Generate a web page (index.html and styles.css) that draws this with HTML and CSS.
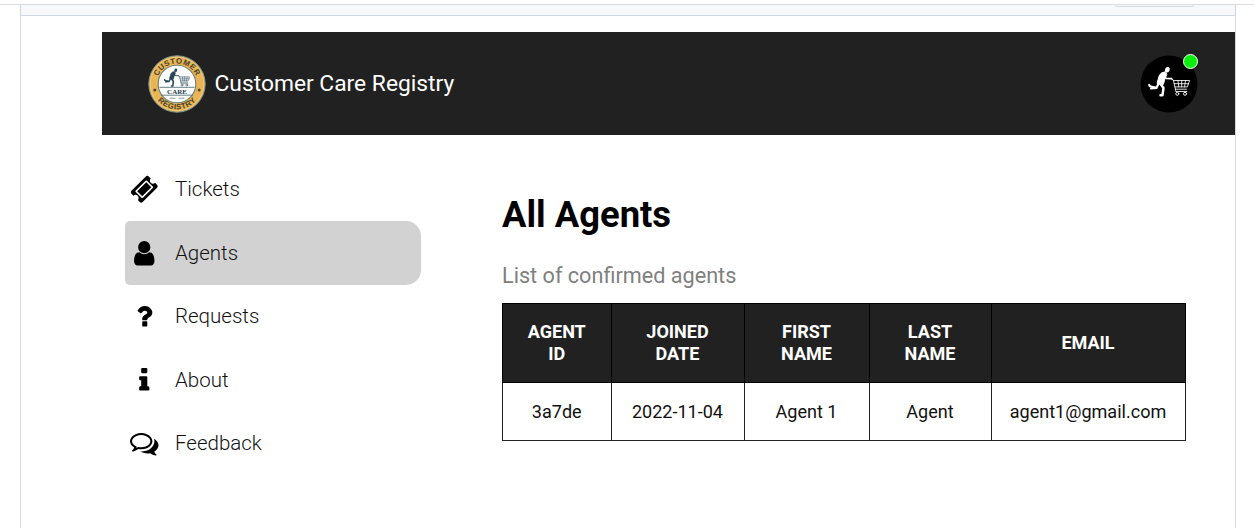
FILE: index.html
```html
<!DOCTYPE html>
<html lang="en">
<head>
<meta charset="utf-8">
<title>Customer Care Registry</title>
<link rel="stylesheet" href="styles.css">
</head>
<body>
<div class="page">
  <div class="viewer">
    <div class="viewer-bar"><span class="viewer-button"></span></div>
    <div class="app">
      <header class="header">
        <svg class="logo" viewBox="0 0 58 58">
          <defs>
            <path id="arc-top" d="M8.500 29a20.500 20.500 0 0 1 41 0"/>
            <path id="arc-bottom" d="M3.600 29a25.400 25.400 0 0 0 50.800 0"/>
          </defs>
          <circle cx="29" cy="29" r="28.2" fill="#eab354" stroke="#7c9890" stroke-width="1"/>
          <circle cx="29" cy="29" r="26.8" fill="none" stroke="#f3d796" stroke-width=".6"/>
          <circle cx="29" cy="29" r="18.8" fill="#fff" stroke="#68857f" stroke-width="1.1"/>
          <text class="seal-text"><textPath href="#arc-top" startOffset="50%">CUSTOMER</textPath></text>
          <text class="seal-text"><textPath href="#arc-bottom" startOffset="50%">REGISTRY</textPath></text>
          <circle cx="6.8" cy="35" r="1.5" fill="#4e4a30"/>
          <circle cx="51.2" cy="35" r="1.5" fill="#4e4a30"/>
          <g transform="translate(15.5 13.2) scale(.62)" color="#274657"><use href="#runner"/></g>
          <path d="M11.5 32.3h35M13 40.2h32" stroke="#55737c" stroke-width=".9"/>
          <text class="seal-care" x="29" y="38.8">CARE</text>
          <path d="M21.5 43.2h6M30.5 43.2h6" stroke="#8da0a4" stroke-width="1"/>
        </svg>
        <h1 class="brand">Customer Care Registry</h1>
        <div class="avatar">
          <svg viewBox="0 0 58 58" width="58" height="58">
            <circle cx="29" cy="29" r="28.5" fill="#000"/>
            <g transform="translate(7.5 11.5)" color="#fff">
              <g id="runner" fill="currentColor" stroke="currentColor" stroke-linecap="round" stroke-linejoin="round">
                <ellipse cx="19.8" cy="3.2" rx="2.3" ry="2.8" stroke="none" transform="rotate(20 19.8 3.2)"/>
                <path d="M17.800 5.300q-4 .2-6 3.500-1.200 4-2.200 8l5.500 2q1.500-2 2-5.500l2-5z" stroke-width="1"/>
                <path d="M17 8.500l1.500 3.400 5.600.3" fill="none" stroke-width="1.7"/>
                <path d="M12.700 17l3.300 4.400-1 7.300h-2" fill="none" stroke-width="2.500"/>
                <path d="M11.300 16.500l-2.300 4.800-6.500-1.500-.8-1.300M9 21.500l-5.500.5" fill="none" stroke-width="2.200"/>
                <path d="M23.500 12.200l2.300 1.200 2.200 9.300h11M25.800 14h16.300l-2.300 6.400H27.400M26.600 17.200h14.500M30.500 14l.8 6.400M34.200 14v6.400M38 14l-.9 6.400M28 22.700l.3 2.300h11" fill="none" stroke-width=".85"/>
                <circle cx="29.8" cy="27.3" r="1.5" fill="none" stroke-width=".9"/>
                <circle cx="37.5" cy="27.3" r="1.5" fill="none" stroke-width=".9"/>
              </g>
            </g>
          </svg>
          <span class="status"></span>
        </div>
      </header>
      <div class="body">
        <nav class="nav">
          <a class="nav-item"><svg class="icon" viewBox="0 0 1792 1792"><path d="M1024 452l316 316-572 572-316-316zm-211 979l618-618q19-19 19-45t-19-45l-362-362q-18-18-45-18t-45 18l-618 618q-19 19-19 45t19 45l362 362q18 18 45 18t45-18zm889-637l-907 908q-37 37-90.500 37t-90.500-37l-126-126q56-56 56-136t-56-136-136-56-136 56l-125-126q-37-37-37-90.500t37-90.500l907-906q37-37 90.500-37t90.500 37l125 125q-56 56-56 136t56 136 136 56 136-56l126 125q37 37 37 90.500t-37 90.500z"/></svg><span>Tickets</span></a>
          <a class="nav-item active"><svg class="icon" viewBox="0 0 1792 1792"><path d="M1536 1399q0 109-62.500 187t-150.500 78h-854q-88 0-150.500-78t-62.500-187q0-85 8.500-160.500t31.500-152 58.500-131 94-89 134.500-34.500q131 128 313 128t313-128q76 0 134.500 34.500t94 89 58.500 131 31.500 152 8.500 160.500zm-256-887q0 159-112.500 271.500t-271.500 112.500-271.500-112.500-112.500-271.500 112.500-271.500 271.500-112.500 271.500 112.500 112.500 271.500z"/></svg><span>Agents</span></a>
          <a class="nav-item"><svg class="icon" viewBox="0 0 1792 1792"><path d="M1088 1256v240q0 16-12 28t-28 12h-240q-16 0-28-12t-12-28v-240q0-16 12-28t28-12h240q16 0 28 12t12 28zm316-600q0 54-15.500 101t-35 76.500-55 59.500-57.500 43.500-61 35.500q-41 23-68.500 65t-27.500 67q0 17-12 32.500t-28 15.500h-240q-15 0-25.500-18.500t-10.500-37.500v-45q0-83 65-156.500t143-108.500q59-27 84-56t25-76q0-42-46.500-74t-107.500-32q-65 0-108 29-35 25-107 115-13 16-31 16-12 0-25-8l-164-125q-13-10-15.500-25t5.500-28q160-266 464-266 80 0 161 31t146 83 106 127.500 41 158.500z"/></svg><span>Requests</span></a>
          <a class="nav-item"><svg class="icon" viewBox="0 0 1792 1792"><path d="M1216 1344v128q0 26-19 45t-45 19h-512q-26 0-45-19t-19-45v-128q0-26 19-45t45-19h64v-384h-64q-26 0-45-19t-19-45v-128q0-26 19-45t45-19h384q26 0 45 19t19 45v576h64q26 0 45 19t19 45zm-128-1152v192q0 26-19 45t-45 19h-256q-26 0-45-19t-19-45v-192q0-26 19-45t45-19h256q26 0 45 19t19 45z"/></svg><span>About</span></a>
          <a class="nav-item"><svg class="icon" viewBox="0 0 1792 1792"><path d="M704 384q-153 0-286 52t-211.500 141-78.500 191q0 82 53 158t149 132l97 56-35 84q34-20 62-39l44-31 53 10q78 14 153 14 153 0 286-52t211.500-141 78.500-191-78.500-191-211.500-141-286-52zm0-128q191 0 353.500 68.500t256.500 186.500 94 257-94 257-256.500 186.500-353.500 68.500q-86 0-176-16-124 88-278 128-36 9-86 16h-3q-11 0-20.500-8t-11.500-21q-1-3-1-6.500t.5-6.500 2-6l2.500-5 3.500-5.500 4-5 4.500-5 4-4.500q5-6 23-25t26-29.500 22.500-29 25-38.500 20.500-44q-124-72-195-177t-71-224q0-139 94-257t256.500-186.500 353.500-68.500zm822 1169q10 24 20.500 44t25 38.500 22.500 29 26 29.500 23 25q1 1 4 4.500t4.500 5 4 5 3.500 5.500l2.500 5 2 6 .5 6.500-1 6.500q-3 14-13 22t-22 7q-50-7-86-16-154-40-278-128-90 16-176 16-271 0-472-132 58 4 88 4 161 0 309-45t264-129q125-92 192-212t67-254q0-77-23-152 129 71 204 178t75 230q0 120-71 224.500t-195 176.500z"/></svg><span>Feedback</span></a>
        </nav>
        <main class="content">
          <h2 class="title">All Agents</h2>
          <p class="subtitle">List of confirmed agents</p>
          <table class="agents">
            <colgroup><col class="c-id"><col class="c-date"><col class="c-first"><col class="c-last"><col class="c-email"></colgroup>
            <thead><tr><th>AGENT<br>ID</th><th>JOINED<br>DATE</th><th>FIRST<br>NAME</th><th>LAST<br>NAME</th><th>EMAIL</th></tr></thead>
            <tbody><tr><td>3a7de</td><td>2022-11-04</td><td>Agent 1</td><td>Agent</td><td>agent1@gmail.com</td></tr></tbody>
          </table>
        </main>
      </div>
    </div>
  </div>
</div>
</body>
</html>
```
FILE: styles.css
```css
* { box-sizing: border-box; }
body { margin: 0; background: #fff; font-family: Roboto, "Liberation Sans", sans-serif; color: #000; }
.page { height: 528px; padding-top: 4px; overflow: hidden; }
.page::before { content: ""; display: block; height: 1px; background: #dcdcde; }
.viewer { margin: 0 18px 0 20px; height: 523px; border: solid #d0d7de; border-width: 0 1px; }
.viewer-bar { display: flex; justify-content: flex-end; height: 11px; padding-right: 41px; background: #f6f8fa; border-bottom: 1px solid #d0d7de; }
.viewer-button { width: 79px; height: 2px; border: 1px solid #d5d9dc; border-top: 0; border-radius: 0 0 5px 5px; }
.app { margin: 16px 0 0 81px; }
.header { display: flex; align-items: center; height: 103px; padding: 0 37px 0 46px; background: #212121; }
.logo { width: 58px; height: 58px; }
.seal-text { font: 700 7.8px "Liberation Sans", sans-serif; letter-spacing: .5px; text-anchor: middle; fill: #45422c; }
.seal-care { font: 700 7px "Liberation Serif", serif; text-anchor: middle; fill: #1f3b4a; }
.brand { margin: 0 auto 0 8.5px; font-size: 22.8px; font-weight: 400; color: #fff; }
.avatar { position: relative; width: 58px; height: 58px; }
.status { position: absolute; top: -1px; right: 0; width: 15px; height: 15px; border: 1.5px solid #fff; border-radius: 50%; background: #0bf00f; }
.body { display: flex; }
.nav { width: 296px; margin: 22.5px 0 0 23px; }
.nav-item { display: flex; align-items: center; height: 63.5px; padding-left: 5px; font-size: 20.5px; font-weight: 300; color: #111; border-radius: 5px 15px 15px 5px; }
.nav-item span { margin-left: 16.5px; }
.active { background: #d2d2d2; }
.icon { width: 28.5px; height: 28.5px; fill: #000; }
.content { width: 684px; margin: 57px 0 0 81px; }
.title { margin: 0; font-size: 36.4px; line-height: 46px; font-weight: 700; }
.subtitle { margin: 25px 0 14px; font-size: 21.65px; line-height: 26px; color: #808080; }
.agents { width: 683px; table-layout: fixed; border-collapse: collapse; font-size: 18.05px; line-height: 22px; text-align: center; }
.agents th, .agents td { padding: 0; border: 1px solid #222; }
.agents th { height: 79px; background: #212121; border-color: #000; color: #fff; font-weight: 700; }
.agents td { height: 58px; color: #111; }
.c-id { width: 108.5px; }
.c-date { width: 133px; }
.c-first { width: 125px; }
.c-last { width: 122px; }
.c-email { width: 194px; }
```
